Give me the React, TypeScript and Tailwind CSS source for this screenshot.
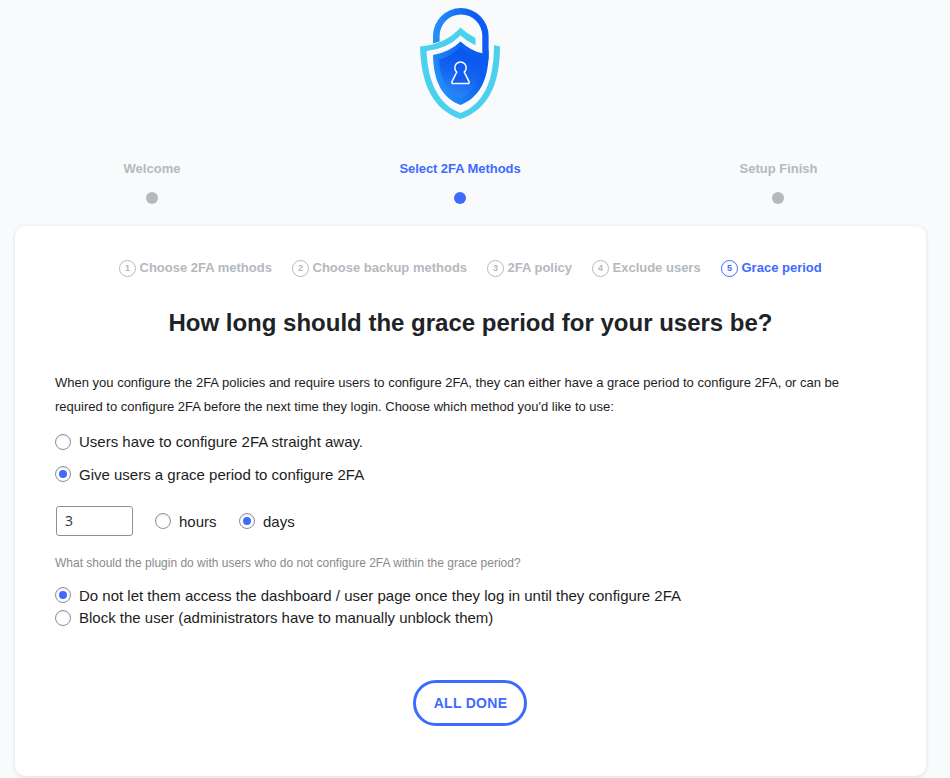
import { useState } from "react";

function Logo() {
  return (
    <svg className="block h-[125px] w-[100px]" viewBox="0 0 100 125" fill="none">
      <defs>
        <linearGradient id="shackle" x1="23" y1="0" x2="79" y2="0" gradientUnits="userSpaceOnUse">
          <stop offset="0" stopColor="#2791f5" />
          <stop offset="0.75" stopColor="#0d5cf2" />
        </linearGradient>
        <linearGradient id="rim" x1="23" y1="85" x2="79" y2="60" gradientUnits="userSpaceOnUse">
          <stop offset="0" stopColor="#2595f7" />
          <stop offset="0.8" stopColor="#0d5cf2" />
        </linearGradient>
        <linearGradient id="core" x1="55" y1="58" x2="42" y2="98" gradientUnits="userSpaceOnUse">
          <stop offset="0" stopColor="#0b58ef" />
          <stop offset="0.4" stopColor="#1464f1" />
          <stop offset="1" stopColor="#2b8af8" />
        </linearGradient>
      </defs>
      <path d="M23 43.500V36a27.800 28 0 0 1 55.600 0V60L72.300 53V36a21.300 21.500 0 0 0-42.700 0v5.500Z" fill="url(#shackle)" />
      <path
        d="M50.500 27.500Q57 34 65.500 38v7.200Q57 41.500 50.500 35.500Q37 49 16.500 51C18 83 29 105 50.500 113C72 105 84 84 84 45L90 46.500C90 86 77 110 50.500 119C24 110 11 86 10 46.500Q36 44 50.500 27.500Z"
        fill="#4bd0ee"
      />
      <path d="M50.500 41.500Q61 51 72.300 53.300L78.600 50V56C78 80 69 98 50.500 105C32 98 23.500 81 23 55Q40 52 50.500 41.500Z" fill="url(#rim)" />
      <path d="M50.500 46Q60 56 72 59.500C71 79 64 92 50.500 98C37 92 30 79 29 59.500Q41 57 50.500 46Z" fill="url(#core)" />
      <path
        d="M46.800 72a5.700 5.700 0 1 1 7.400 0L59 81.600q.6 2-1.200 2H43.200q-1.800 0-1.200-2Z"
        fill="#0f5ef0"
        stroke="#fff"
        strokeWidth="1.500"
        strokeLinejoin="round"
      />
    </svg>
  );
}

function Stage({ label, active = false, className }: { label: string; active?: boolean; className: string }) {
  return (
    <div className={`flex flex-col items-center gap-[13px] ${className} ${active ? "text-[#3e6bff]" : "text-[#b4b9be]"}`}>
      <span className="whitespace-nowrap text-[13px] font-bold leading-5">{label}</span>
      <span className="size-3 rounded-full bg-current" />
    </div>
  );
}

function Step({ n, label, active = false, className }: { n: number; label: string; active?: boolean; className: string }) {
  return (
    <li className={`flex items-center gap-[3px] ${className} ${active ? "text-[#3e6bff]" : "text-[#b4b9be]"}`}>
      <span className="mt-px flex size-[17px] shrink-0 items-center justify-center rounded-full border border-current text-[9px] font-bold leading-none">
        {n}
      </span>
      <span className="whitespace-nowrap pl-[0.5px] text-[13px] font-bold leading-5">{label}</span>
    </li>
  );
}

type RadioProps = { label: string; checked: boolean; onChange: () => void; name: string; className?: string };

function Radio({ label, checked, onChange, name, className = "" }: RadioProps) {
  return (
    <label className={`flex h-[22px] items-center gap-2 whitespace-nowrap text-[15px] text-[#1d1d1d] ${className}`}>
      <input type="radio" name={name} checked={checked} onChange={onChange} className="sr-only" />
      <span className="flex size-4 items-center justify-center rounded-full border border-[#8c8f94] bg-white shadow-[inset_0_1px_2px_rgba(0,0,0,0.1)]">
        {checked && <span className="size-2 rounded-full bg-[#3e6bff]" />}
      </span>
      <span>{label}</span>
    </label>
  );
}

export default function App() {
  const [grace, setGrace] = useState(true);
  const [unit, setUnit] = useState("days");
  const [block, setBlock] = useState(false);
  const [amount, setAmount] = useState("3");

  return (
    <div className="h-[778px] w-[950px] overflow-hidden bg-[#f8fafc] font-['Liberation_Sans',Arial,sans-serif]">
      <header className="ml-[15px] w-[911px]">
        <div className="ml-[395px] w-[100px]">
          <Logo />
        </div>
        <div className="ml-[108px] mt-[34px] flex w-[694px] justify-between">
          <Stage label="Welcome" className="w-[58px]" />
          <Stage label="Select 2FA Methods" active className="w-[121px] tracking-[-0.06px]" />
          <Stage label="Setup Finish" className="w-[78px] [&>span:first-child]:pl-px" />
        </div>
      </header>

      <main className="ml-[15px] mt-[22px] h-[550px] w-[911px] rounded-[10px] bg-white px-10 pt-8 shadow-[0_1px_4px_rgba(0,0,0,0.12)]">
        <ol className="ml-16 flex">
          <Step n={1} label="Choose 2FA methods" className="w-[173px]" />
          <Step n={2} label="Choose backup methods" className="w-[195px]" />
          <Step n={3} label="2FA policy" className="w-[105px]" />
          <Step n={4} label="Exclude users" className="w-[129px]" />
          <Step n={5} label="Grace period" active className="w-[101px]" />
        </ol>

        <h1 className="mt-[29px] whitespace-nowrap text-center text-[24px] font-bold leading-8 text-[#1d2327]">
          How long should the grace period for your users be?
        </h1>

        <p className="mt-8 whitespace-nowrap text-[13px] leading-6 text-[#1d1d1d]">
          When you configure the 2FA policies and require users to configure 2FA, they can either have a grace period to configure 2FA, or can be
          <br />
          required to configure 2FA before the next time they login. Choose which method you'd like to use:
        </p>

        <Radio name="grace" label="Users have to configure 2FA straight away." checked={!grace} onChange={() => setGrace(false)} className="mt-3" />
        <Radio
          name="grace"
          label="Give users a grace period to configure 2FA"
          checked={grace}
          onChange={() => setGrace(true)}
          className="mt-[10px] [&>span:last-child]:pt-0.5"
        />

        <div className="mt-[21px] flex h-[30px] items-center">
          <input
            value={amount}
            onChange={(e) => setAmount(e.target.value)}
            className="ml-px mr-[22px] h-[30px] w-[77px] rounded-[3px] border border-[#8c8f94] px-2 pb-0.5 font-['Open_Sans',sans-serif] text-[14px] text-[#2c3338]"
          />
          <Radio
            name="unit"
            label="hours"
            checked={unit === "hours"}
            onChange={() => setUnit("hours")}
            className="w-[84px] [&>span:last-child]:pt-0.5"
          />
          <Radio
            name="unit"
            label="days"
            checked={unit === "days"}
            onChange={() => setUnit("days")}
            className="[&>span:last-child]:pt-0.5"
          />
        </div>

        <p className="mt-[15px] whitespace-nowrap text-[12px] leading-6 text-[#8a8a8a]">
          What should the plugin do with users who do not configure 2FA within the grace period?
        </p>

        <Radio
          name="block"
          label="Do not let them access the dashboard / user page once they log in until they configure 2FA"
          checked={!block}
          onChange={() => setBlock(false)}
          className="mt-[9px] [&>span:last-child]:pt-0.5"
        />
        <Radio
          name="block"
          label="Block the user (administrators have to manually unblock them)"
          checked={block}
          onChange={() => setBlock(true)}
          className="mt-px"
        />

        <button className="ml-[358px] mt-[51px] block h-[46px] w-[114px] whitespace-nowrap rounded-full border-[3px] border-[#3e6bff] pl-px text-[14px] font-bold tracking-[0.3px] text-[#3e6bff]">
          ALL DONE
        </button>
      </main>
    </div>
  );
}
